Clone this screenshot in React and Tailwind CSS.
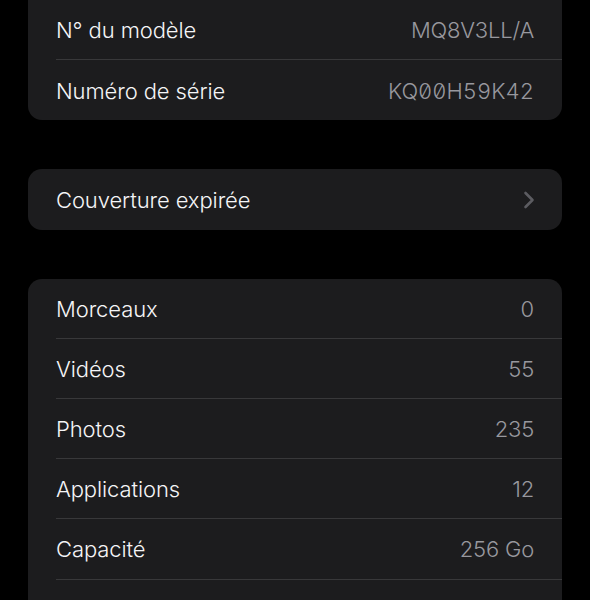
import React from 'react';

const font = { fontFamily: 'Inter, "Noto Sans", sans-serif' };

function Row({ label, value, mono, last, chevron }) {
  return (
    <div className="pl-[28px]">
      <div
        className={`flex items-center justify-between h-[60.2px] pt-[2px] pr-[28px] ${
          last ? '' : 'border-b border-[#38383a]'
        }`}
      >
        <span className="text-[22px] text-[#f5f5f7] font-light tracking-[-0.1px]">{label}</span>
        {chevron ? (
          <svg width="12" height="18" viewBox="0 0 12 18" className="mr-[-1px]">
            <path d="M2.5 2 L9.5 9 L2.5 16" fill="none" stroke="#5c5c61" strokeWidth="2.6" strokeLinecap="round" strokeLinejoin="round" />
          </svg>
        ) : (
          <span
            className={
              mono
                ? 'text-[22px] text-[#98989e] font-light'
                : 'text-[22px] text-[#98989e] font-light tracking-[-0.2px]'
            }
            style={mono ? { fontFeatureSettings: '"zero" 1, "tnum" 1' } : undefined}
          >
            {value}
          </span>
        )}
      </div>
    </div>
  );
}

export default function App() {
  return (
    <div className="h-[600px] w-full overflow-hidden bg-black" style={font}>
      <div className="px-[28px]">
        <div className="rounded-b-[14px] bg-[#1c1c1e]">
          <Row label="N° du modèle" value="MQ8V3LL/A" />
          <Row label="Numéro de série" value="KQ00H59K42" mono last />
        </div>

        <div className="mt-[49px] rounded-[14px] bg-[#1c1c1e]">
          <Row label="Couverture expirée" chevron last />
        </div>

        <div className="mt-[49px] rounded-t-[14px] bg-[#1c1c1e]">
          <Row label="Morceaux" value="0" />
          <Row label="Vidéos" value="55" />
          <Row label="Photos" value="235" />
          <Row label="Applications" value="12" />
          <Row label="Capacité" value="256 Go" />
          <Row label="Disponible" value="201,4 Go" />
        </div>
      </div>
    </div>
  );
}
